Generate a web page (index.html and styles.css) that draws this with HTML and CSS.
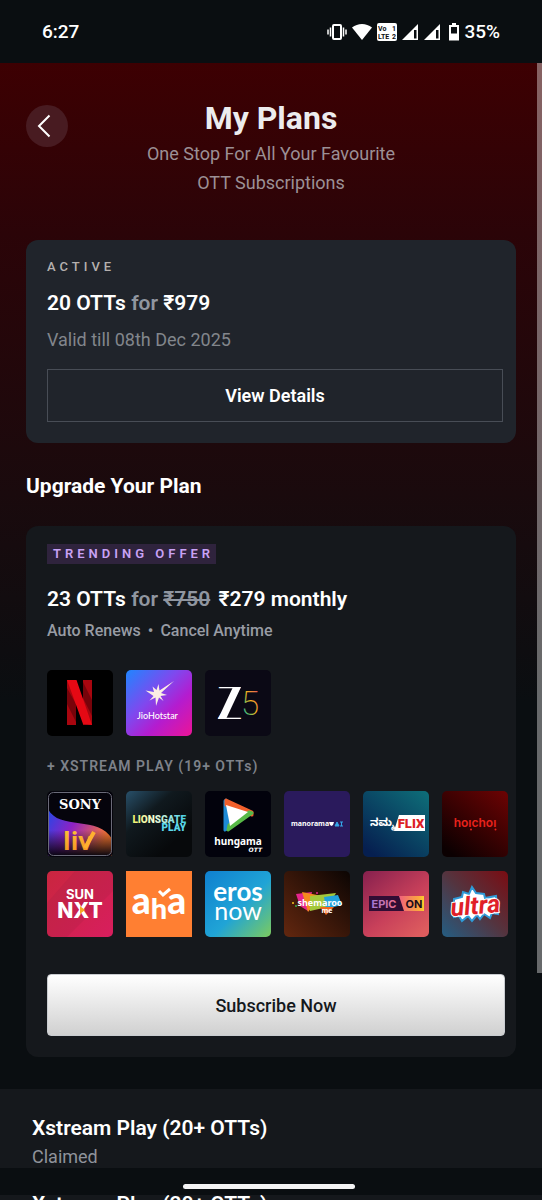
FILE: index.html
```html
<!DOCTYPE html>
<html lang="en">
<head>
    <meta charset="UTF-8">
    <meta name="viewport" content="width=device-width, initial-scale=1.0">
    <title>My Plans</title>
    <link rel="stylesheet" href="styles.css">
</head>
<body>
    <div class="status-bar">
        <span>6:27</span>
        <div class="status-icons">
            <svg width="20" height="18" viewBox="0 0 20 18" fill="none" stroke="#fff">
                <rect x="6" y="2" width="8" height="14" rx="1" stroke-width="2"/>
                <path d="M3.5 4.5v9M16.500 4.500v9M1 6.500v5M19 6.500v5" stroke-width="1.500"/>
            </svg>
            <svg class="wifi" width="20" height="18" viewBox="0 0 20 18"><path d="M10 17L0 4.500Q4.500 1 10 1t10 3.500z" fill="#fff"/></svg>
            <svg class="volte" width="20" height="18" viewBox="0 0 20 18">
                <rect width="20" height="18" rx="2" fill="#fff"/>
                <g class="volte-text">
                    <text x="1" y="8">Vo</text><text x="15" y="8">1</text>
                    <text x="1" y="16">LTE</text><text x="15" y="16">2</text>
                </g>
            </svg>
            <svg class="signal" width="17" height="18" viewBox="0 0 17 18"><path fill-rule="evenodd" d="M16 1v16H0zM12 7v8.500h2.500V7z" fill="#fff"/></svg>
            <svg class="signal" width="17" height="18" viewBox="0 0 17 18"><path fill-rule="evenodd" d="M16 1v16H0zM12 7v8.500h2.500V7z" fill="#fff"/></svg>
            <svg class="battery" width="10" height="18" viewBox="0 0 10 18"><path fill-rule="evenodd" d="M3 0h4v2h3v15.500H0V2h3zM2 4v6.500h6V4z" fill="#fff"/></svg>
            <span>35%</span>
        </div>
    </div>

    <main class="page">
        <div class="scrollbar"></div>

        <header class="header">
            <button class="back-btn" aria-label="Back">
                <svg width="14" height="24" viewBox="0 0 14 24" fill="none" stroke="#fff" stroke-width="2"><path d="M12.500 1.500L2 12l10.500 10.500"/></svg>
            </button>
            <h1>My Plans</h1>
            <p>One Stop For All Your Favourite<br>OTT Subscriptions</p>
        </header>

        <section class="card active-card">
            <span class="active-label">ACTIVE</span>
            <h3>20 OTTs <span class="muted">for</span> ₹979</h3>
            <p class="valid">Valid till 08th Dec 2025</p>
            <button class="details-btn">View Details</button>
        </section>

        <h2>Upgrade Your Plan</h2>

        <section class="card offer-card">
            <span class="tag">TRENDING OFFER</span>
            <h3>23 OTTs <span class="muted">for <s>₹750</s></span> <span class="price">₹279 monthly</span></h3>
            <p class="terms">Auto Renews <span class="dot">•</span> Cancel Anytime</p>

            <div class="logos">
                <svg class="logo" viewBox="0 0 66 66">
                    <rect width="66" height="66" fill="#000"/>
                    <rect x="20" y="10" width="9" height="45" fill="#a8060f"/>
                    <rect x="36" y="10" width="9" height="45" fill="#a8060f"/>
                    <path d="M20 18v16l9 18V34zM45 46V30l-9-18v16z" fill="#560207" opacity=".6"/>
                    <path d="M20 10h9.500L45 55q-5-1-9-1z" fill="#e50914"/>
                </svg>
                <svg class="logo" viewBox="0 0 66 66">
                    <defs><linearGradient id="jio" x1="0" y1="0" x2="1" y2="1"><stop offset="0" stop-color="#1f86ff"/><stop offset=".4" stop-color="#8048ee"/><stop offset=".65" stop-color="#b41ccf"/><stop offset="1" stop-color="#ec1496"/></linearGradient></defs>
                    <rect width="66" height="66" fill="url(#jio)"/>
                    <path d="M48 11L35 23l6 2-6.500 1 3 5-4.500-3.500L30 36l-.5-8.500-6 3 4-4.500-8-5.500 8.500 1.500-1.500-5.500 4 3.500L32.500 14l1 6.500z" fill="#fbeee4"/>
                    <text x="11" y="49" class="t-jio">JioHotstar</text>
                </svg>
                <svg class="logo" viewBox="0 0 66 66">
                    <defs><linearGradient id="five" x1="0" y1="1" x2="1" y2="0"><stop offset="0" stop-color="#1fb5f0"/><stop offset=".3" stop-color="#55c06a"/><stop offset=".55" stop-color="#f3b21d"/><stop offset="1" stop-color="#e0366f"/></linearGradient></defs>
                    <rect width="66" height="66" fill="#0b0915"/>
                    <text x="11" y="49" class="t-z">Z</text>
                    <path d="M28 17h8L21 49h-8z" fill="#fff"/>
                    <text x="36" y="45" class="t-five" fill="url(#five)">5</text>
                </svg>
            </div>

            <h4>+ XSTREAM PLAY (19+ OTTs)</h4>

            <div class="logos">
                <svg class="logo" viewBox="0 0 66 66">
                    <defs>
                        <linearGradient id="liv" x1="0" y1="0" x2="1" y2=".4"><stop offset="0" stop-color="#2148e8"/><stop offset=".45" stop-color="#8e22c4"/><stop offset="1" stop-color="#ff7a2e"/></linearGradient>
                        <linearGradient id="livfade" x1="0" y1="0" x2="0" y2="1"><stop offset=".45" stop-color="#07050f" stop-opacity="0"/><stop offset="1" stop-color="#07050f"/></linearGradient>
                        <linearGradient id="gold" x1="0" y1="0" x2="0" y2="1"><stop offset="0" stop-color="#ffcf3c"/><stop offset="1" stop-color="#f58a1f"/></linearGradient>
                    </defs>
                    <rect width="66" height="66" fill="#05040c"/>
                    <path d="M1 18C12 40 52 24 65 48v17H1z" fill="url(#liv)"/>
                    <path d="M1 18C12 40 52 24 65 48v17H1z" fill="url(#livfade)"/>
                    <rect x="1.500" y="1.500" width="63" height="63" rx="5" fill="none" stroke="#6a6a78"/>
                    <text x="33" y="18" class="t-sony">SONY</text>
                    <text x="16" y="59" class="t-liv" fill="url(#gold)">liv</text>
                    <path d="M38 57l9-16" stroke="#ffb02f" stroke-width="4"/>
                </svg>
                <svg class="logo" viewBox="0 0 66 66">
                    <defs>
                        <linearGradient id="lgbg" x1="0" y1="0" x2=".7" y2=".8"><stop offset="0" stop-color="#28506a"/><stop offset=".45" stop-color="#10191e"/><stop offset="1" stop-color="#07090b"/></linearGradient>
                        <linearGradient id="lgtext"><stop offset="0" stop-color="#f0f06a"/><stop offset=".4" stop-color="#f4fbd8"/><stop offset="1" stop-color="#41cdea"/></linearGradient>
                    </defs>
                    <rect width="66" height="66" fill="url(#lgbg)"/>
                    <text x="60" y="32" class="t-lion" fill="url(#lgtext)">LIONSGATE</text>
                    <text x="60" y="40" class="t-lion" fill="#5bd8ea">PLAY</text>
                </svg>
                <svg class="logo" viewBox="0 0 66 66">
                    <rect width="66" height="66" fill="#02020c"/>
                    <g stroke-linejoin="round" stroke-width="3">
                        <path d="M21 9l3 28-4 2V10z" fill="#1d8ad6" stroke="#1d8ad6"/>
                        <path d="M21 9l26 12v3L21 14z" fill="#f2602c" stroke="#f2602c"/>
                        <path d="M47 22L23 39l1-5 20-13z" fill="#58b947" stroke="#58b947"/>
                    </g>
                    <path d="M21 14l22 7-18 14z" fill="#fff"/>
                    <text x="33" y="54" class="t-hun">hungama</text>
                    <text x="57" y="61" class="t-ott">OTT</text>
                </svg>
                <svg class="logo" viewBox="0 0 66 66">
                    <rect width="66" height="66" fill="#2a1a5c"/>
                    <text x="7" y="35" class="t-mano">manorama</text>
                    <path d="M45 31h5l-1 3-1.500 1-1.500-1z" fill="#fff"/>
                    <path d="M51 35l2-4 2 4zM56 31h3M57.500 31v4M56 35h3" fill="#35a7e8" stroke="#35a7e8"/>
                </svg>
                <svg class="logo" viewBox="0 0 66 66">
                    <defs><linearGradient id="namma" x1="1" y1="0" x2=".2" y2="1"><stop offset="0" stop-color="#0e6f79"/><stop offset="1" stop-color="#061f50"/></linearGradient></defs>
                    <rect width="66" height="66" fill="url(#namma)"/>
                    <path d="M36 24h26v16H31z" fill="#fff"/>
                    <text x="7" y="35" class="t-namma">ನಮ್ಮ</text>
                    <text x="48" y="37" class="t-flix">FLIX</text>
                </svg>
                <svg class="logo" viewBox="0 0 66 66">
                    <defs><linearGradient id="hoi" x1="1" y1="0" x2=".2" y2="1"><stop offset="0" stop-color="#6d0303"/><stop offset="1" stop-color="#0b0001"/></linearGradient></defs>
                    <rect width="66" height="66" fill="url(#hoi)"/>
                    <text x="33" y="36" class="t-hoi">hoıchoı</text>
                    <circle cx="29" cy="38.500" r="1" fill="#e8231c"/><circle cx="53.500" cy="38.500" r="1" fill="#e8231c"/>
                </svg>
                <svg class="logo" viewBox="0 0 66 66">
                    <defs><linearGradient id="sun" x1="0" y1="0" x2="1" y2="1"><stop offset="0" stop-color="#c9263f"/><stop offset="1" stop-color="#d81e5e"/></linearGradient></defs>
                    <rect width="66" height="66" fill="url(#sun)"/>
                    <path d="M0 32L28 0h38v20L20 66H0z" fill="#a81e42" opacity=".25"/>
                    <text x="33" y="28" class="t-sun">SUN</text>
                    <text x="33" y="47" class="t-nxt">NXT</text>
                    <path d="M33 35v8l5-4z" fill="#f7a823"/>
                </svg>
                <svg class="logo square" viewBox="0 0 66 66">
                    <rect width="66" height="66" fill="#ff7f32"/>
                    <text x="33" y="43" class="t-aha">a<tspan dy="5" class="t-aha-mid">h</tspan><tspan dy="-5">a</tspan></text>
                    <path d="M33 20l4 4 7-6" fill="none" stroke="#fff" stroke-width="3"/>
                </svg>
                <svg class="logo" viewBox="0 0 66 66">
                    <defs><linearGradient id="eros" x1="0" y1="0" x2="1" y2="1"><stop offset="0" stop-color="#0f80cf"/><stop offset=".55" stop-color="#20a4d6"/><stop offset="1" stop-color="#7ccb5e"/></linearGradient></defs>
                    <rect width="66" height="66" fill="url(#eros)"/>
                    <text x="33" y="30" class="t-eros">eros</text>
                    <text x="33" y="49" class="t-now">now</text>
                </svg>
                <svg class="logo" viewBox="0 0 66 66">
                    <defs><linearGradient id="shem" x1="1" y1="0" x2="0" y2="1"><stop offset="0" stop-color="#0b0503"/><stop offset="1" stop-color="#63270f"/></linearGradient></defs>
                    <rect width="66" height="66" fill="url(#shem)"/>
                    <path d="M12 23l16-2-4 19-8-5z" fill="#e5258c"/>
                    <path d="M18 21l20 4-14 16z" fill="#f58a1f"/>
                    <path d="M26 25l26-3-8 14-18 4z" fill="#a3c83a"/>
                    <path d="M40 26l14-2 4 10-16 4z" fill="#22a3dc"/>
                    <path d="M36 36h14l-8 8z" fill="#f26a21"/>
                    <circle cx="9" cy="32" r="1" fill="#f7c51e"/><circle cx="12" cy="35" r="1" fill="#39b54a"/><circle cx="33" cy="22" r="1" fill="#e5258c"/>
                    <text x="36" y="35" class="t-shem">shemaroo</text>
                    <text x="43" y="42" class="t-me">me</text>
                </svg>
                <svg class="logo" viewBox="0 0 66 66">
                    <defs>
                        <linearGradient id="epic" x1="0" y1="0" x2=".8" y2="1"><stop offset="0" stop-color="#86204e"/><stop offset=".6" stop-color="#c8405a"/><stop offset="1" stop-color="#dd5c5e"/></linearGradient>
                        <linearGradient id="on"><stop offset="0" stop-color="#f0607e"/><stop offset=".8" stop-color="#fba93d"/><stop offset="1" stop-color="#fbd02b"/></linearGradient>
                        <linearGradient id="epictext"><stop offset="0" stop-color="#a07ad8"/><stop offset="1" stop-color="#f0708c"/></linearGradient>
                    </defs>
                    <rect width="66" height="66" fill="url(#epic)"/>
                    <path d="M6 25h55v15H6z" fill="#310d34"/>
                    <path d="M36 25h25v15H41z" fill="url(#on)"/>
                    <text x="21" y="37" class="t-epic" fill="url(#epictext)">EPIC</text>
                    <text x="51" y="37" class="t-epic" fill="#1c0c1c">ON</text>
                </svg>
                <svg class="logo" viewBox="0 0 66 66">
                    <defs><linearGradient id="ultra" x1="1" y1="0" x2="0" y2="1"><stop offset="0" stop-color="#7a0c12"/><stop offset=".5" stop-color="#54343f"/><stop offset="1" stop-color="#245d82"/></linearGradient></defs>
                    <rect width="66" height="66" fill="url(#ultra)"/>
                    <!-- jagged outline behind the word -->
                    <path d="M12 28l8-2 1-5 6 2 3-7 4 6 8 1 1 4 11-2 2 18-6-1-2 5-6-4-4 5-3-4-5 6-4-5-6 5-3-5-5 1z" fill="#fff" stroke="#2f9bd8" stroke-width="2"/>
                    <text x="33" y="43" class="t-ultra" transform="rotate(-5 33 33)">ultra</text>
                </svg>
            </div>

            <button class="subscribe-btn">Subscribe Now</button>
        </section>

        <section class="claimed-list">
            <div class="claimed-item">
                <h3>Xstream Play (20+ OTTs)</h3>
                <p>Claimed</p>
            </div>
            <div class="claimed-item">
                <h3>Xstream Play (20+ OTTs)</h3>
                <p>Claimed</p>
            </div>
        </section>
    </main>

    <div class="nav-bar"><span class="nav-handle"></span></div>
</body>
</html>
```
FILE: styles.css
```css
* {
    box-sizing: border-box;
}
body {
    margin: 0;
    height: 100vh;
    display: flex;
    flex-direction: column;
    overflow: hidden;
    position: relative;
    background-color: #0a0e11;
    color: #fff;
    font-family: Roboto, "Liberation Sans", sans-serif;
}
h1, h2, h3, h4, p {
    margin: 0;
}
button {
    font-family: inherit;
    cursor: pointer;
}

/* Status bar */
.status-bar {
    flex: none;
    height: 63px;
    padding: 0 42px;
    display: flex;
    align-items: center;
    justify-content: space-between;
    font-size: 19px;
    font-weight: 500;
}
.status-icons {
    display: flex;
    align-items: center;
    gap: 5px;
}
.status-icons .battery {
    margin-left: 3px;
}
.volte-text {
    font-size: 7px;
    font-weight: 700;
    fill: #0a0e11;
}

/* Page */
.page {
    flex: 1;
    min-height: 0;
    overflow: hidden;
    position: relative;
    padding-top: 37px;
    background: linear-gradient(#3d0002 0, #2b0408 170px, #1a0a0d 430px, #0a0e11 640px);
}
.scrollbar {
    position: absolute;
    top: 0;
    right: 0;
    width: 5px;
    height: 80%;
    background-color: rgba(255, 255, 255, 0.38);
}
.header {
    position: relative;
    text-align: center;
    margin-bottom: 43px;
}
.header h1 {
    font-size: 32px;
    line-height: 36px;
    color: #ececee;
}
.header p {
    margin-top: 3px;
    font-size: 18px;
    line-height: 29px;
    color: #9c9095;
}
.back-btn {
    position: absolute;
    left: 26px;
    top: 5px;
    width: 42px;
    height: 42px;
    padding: 0 6px 0 0;
    border: none;
    border-radius: 50%;
    background-color: #481b21;
    display: flex;
    align-items: center;
    justify-content: center;
}
h2 {
    margin: 30px 26px 26px;
    font-size: 21px;
    line-height: 27px;
}
h3 {
    font-size: 21px;
    line-height: 26px;
    font-weight: 600;
}

/* Cards */
.card {
    margin: 0 26px;
    display: flex;
    flex-direction: column;
    align-items: flex-start;
    border-radius: 12px;
}
.muted {
    color: #9096a0;
}
.active-card {
    padding: 18px 13px 21px 21px;
    background-color: #20242b;
}
.active-label {
    font-size: 13px;
    line-height: 18px;
    font-weight: 500;
    letter-spacing: 4px;
    color: #b5b0ae;
    margin-bottom: 14px;
}
.valid {
    margin-top: 12px;
    font-size: 18px;
    line-height: 24px;
    color: #82868c;
}
.details-btn {
    align-self: stretch;
    height: 53px;
    margin-top: 17px;
    border: 1px solid #484d56;
    background: none;
    color: #fff;
    font-size: 18px;
    font-weight: 600;
}
.offer-card {
    padding: 18px 7px 21px 21px;
    background-color: #15181c;
}
.tag {
    padding: 0 2px 0 6px;
    font-size: 13px;
    line-height: 20px;
    font-weight: 600;
    letter-spacing: 4px;
    color: #c9a2f5;
    background-color: #2f233d;
    margin-bottom: 22px;
}
.price {
    margin-left: 3px;
}
.terms {
    margin-top: 9px;
    font-size: 16px;
    line-height: 20px;
    font-weight: 500;
    color: #989ca4;
}
.dot {
    margin: 0 3px;
}
.logos {
    display: flex;
    flex-wrap: wrap;
    gap: 14px 13px;
}
.terms + .logos {
    margin-top: 29px;
}
.logo {
    width: 66px;
    height: 66px;
    border-radius: 5px;
    text-anchor: middle;
    fill: #fff;
}
.square {
    border-radius: 0;
}
h4 {
    margin: 20px 0 15px;
    font-size: 14px;
    line-height: 20px;
    font-weight: 600;
    letter-spacing: 1px;
    color: #7e828a;
}
.subscribe-btn {
    align-self: stretch;
    height: 62px;
    margin: 37px 4px 0 0;
    border: 1px solid #c9ccd0;
    border-radius: 4px;
    background: linear-gradient(#fff, #d0d0d0);
    color: #15181c;
    font-size: 18px;
    font-weight: 500;
}

/* Logo lettering */
.t-jio, .t-z, .t-five, .t-liv, .t-mano, .t-namma {
    text-anchor: start;
}
.t-jio { font: 500 9px Lato, sans-serif; }
.t-z { font: 100 45px Roboto, sans-serif; }
.t-five { font: 200 33px Roboto, sans-serif; }
.t-sony { font: 700 13px "DejaVu Serif", serif; }
.t-liv { font: 700 25px "Open Sans", sans-serif; }
.t-lion { font: 900 10px Roboto, sans-serif; text-anchor: end; }
.t-hun { font: 700 10px "Noto Sans", sans-serif; }
.t-ott { font: italic 700 6px "DejaVu Sans", sans-serif; text-anchor: end; }
.t-mano { font: 700 7px "Noto Sans", sans-serif; }
.t-namma { font: 700 11px "Noto Sans Kannada", "Noto Sans", sans-serif; }
.t-flix { font: 900 13px Roboto, sans-serif; fill: #dc1f26; }
.t-hoi { font: 600 12px Inter, sans-serif; fill: #e8231c; }
.t-sun { font: 700 13px Inter, sans-serif; }
.t-nxt { font: 800 21px Inter, sans-serif; }
.t-aha { font: 900 37px Lato, sans-serif; }
.t-aha-mid { font-size: 29px; }
.t-eros { font: 700 26px Lato, sans-serif; }
.t-now { font: 400 25px Lato, sans-serif; }
.t-shem { font: 700 9px "Noto Sans", sans-serif; }
.t-me { font: 700 7px "Noto Sans", sans-serif; }
.t-epic { font: 700 11px Inter, sans-serif; }
.t-ultra {
    font: italic 700 25px "Liberation Sans Narrow", Roboto, sans-serif;
    stroke: #fff;
    stroke-width: 2px;
    paint-order: stroke;
    fill: #e01f28;
}

/* Claimed plans */
.claimed-list {
    margin-top: 32px;
    padding: 26px 32px;
    background-color: #15181c;
}
.claimed-item {
    height: 76px;
}
.claimed-item p {
    margin-top: 4px;
    font-size: 18px;
    line-height: 24px;
    color: #8f939b;
}

/* Gesture bar over the page */
.nav-bar {
    position: absolute;
    left: 0;
    right: 0;
    bottom: 5px;
    height: 27px;
    display: flex;
    justify-content: center;
    align-items: center;
    padding: 10px 4px 0 0;
    background-color: #0a0e11;
}
.nav-handle {
    width: 32%;
    height: 5px;
    border-radius: 3px;
    background-color: #f4f4f5;
}
```
